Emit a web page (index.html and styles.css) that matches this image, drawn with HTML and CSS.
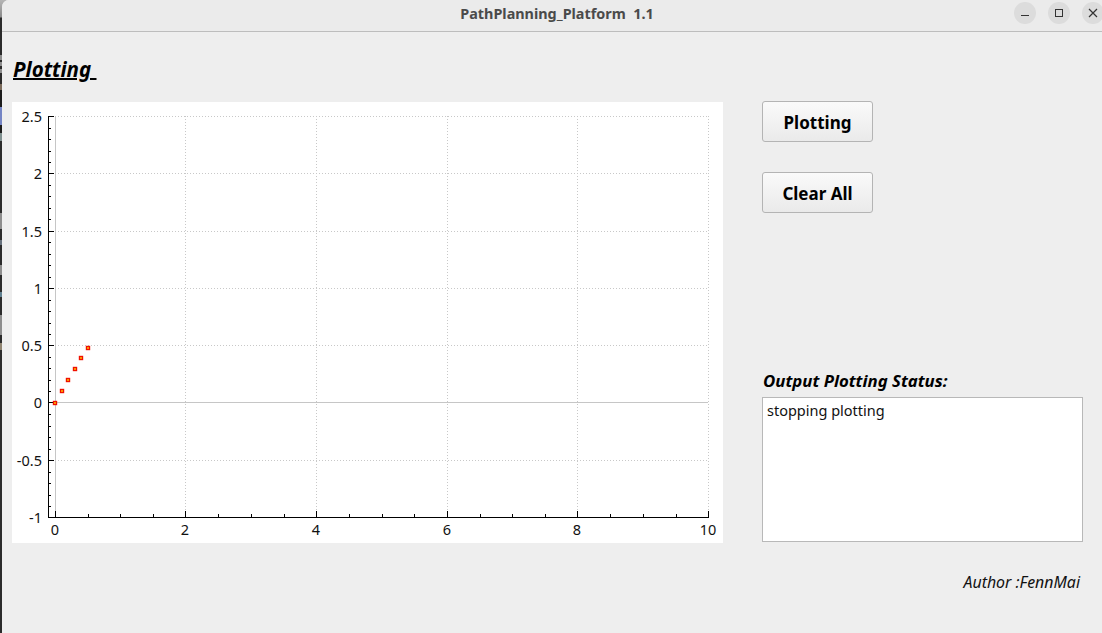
FILE: index.html
```html
<!DOCTYPE html>
<html lang="en">
<head>
<meta charset="utf-8">
<title>PathPlanning_Platform 1.1</title>
<link rel="stylesheet" href="styles.css">
</head>
<body class="desktop">
<div class="window">
  <header class="titlebar">
    <div class="title">PathPlanning_Platform&nbsp; 1.1</div>
    <div class="controls">
      <span class="ctl"><svg width="22" height="22" viewBox="0 0 22 22"><path d="M7 13.5h8" stroke="#333" stroke-width="1" fill="none"/></svg></span>
      <span class="ctl"><svg width="22" height="22" viewBox="0 0 22 22"><rect x="7.5" y="7.5" width="7" height="7" stroke="#333" fill="none"/></svg></span>
      <span class="ctl"><svg width="22" height="22" viewBox="0 0 22 22"><path d="M7 7l8 8M15 7l-8 8" stroke="#333" stroke-width="1.2" fill="none"/></svg></span>
    </div>
  </header>
  <main class="content">
    <section class="left">
      <h1 class="heading">Plotting&nbsp;</h1>
      <div class="plot">
        <svg class="chart" width="711" height="441" viewBox="0 0 711 441">
          <g class="grid">
            <path d="M43 14.5H696M43 71.5H696M43 129.5H696M43 186.5H696M43 243.5H696M43 358.5H696"/>
            <path d="M173.5 14V415M304.5 14V415M435.5 14V415M565.5 14V415M696.5 14V415"/>
          </g>
          <path class="zero" d="M43.5 14V415M43 300.5H696"/>
          <path class="axis" d="M36.5 14V415.5M36 415.5H697"/>
          <path class="axis" d="M36 14.5h6M36 71.5h6M36 129.5h6M36 186.5h6M36 243.5h6M36 300.5h6M36 358.5h6M36 415.5h6M43.5 415v-6M173.5 415v-6M304.5 415v-6M435.5 415v-6M565.5 415v-6M696.5 415v-6"/>
          <path class="axis" d="M36 26.5h3M36 37.5h3M36 49.5h3M36 60.5h3M36 83.5h3M36 94.5h3M36 106.5h3M36 117.5h3M36 140.5h3M36 152.5h3M36 163.5h3M36 175.5h3M36 198.5h3M36 209.5h3M36 221.5h3M36 232.5h3M36 255.5h3M36 266.5h3M36 278.5h3M36 289.5h3M36 312.5h3M36 324.5h3M36 335.5h3M36 347.5h3M36 370.5h3M36 381.5h3M36 393.5h3M36 404.5h3M76.5 415v-3M108.5 415v-3M141.5 415v-3M206.5 415v-3M239.5 415v-3M272.5 415v-3M337.5 415v-3M370.5 415v-3M402.5 415v-3M468.5 415v-3M500.5 415v-3M533.5 415v-3M598.5 415v-3M631.5 415v-3M664.5 415v-3"/>
          <g class="ylabels">
            <text x="30" y="20">2.5</text>
            <text x="30" y="77">2</text>
            <text x="30" y="135">1.5</text>
            <text x="30" y="192">1</text>
            <text x="30" y="249">0.5</text>
            <text x="30" y="306">0</text>
            <text x="30" y="364">-0.5</text>
            <text x="30" y="421">-1</text>
          </g>
          <g class="xlabels">
            <text x="43" y="433">0</text>
            <text x="173" y="433">2</text>
            <text x="304" y="433">4</text>
            <text x="435" y="433">6</text>
            <text x="565" y="433">8</text>
            <text x="696" y="433">10</text>
          </g>
          <g class="points">
            <rect x="41.5" y="299.5" width="3" height="3"/>
            <rect x="48.5" y="287.5" width="3" height="3"/>
            <rect x="54.5" y="276.5" width="3" height="3"/>
            <rect x="61.5" y="265.5" width="3" height="3"/>
            <rect x="67.5" y="254.5" width="3" height="3"/>
            <rect x="74.5" y="244.5" width="3" height="3"/>
          </g>
        </svg>
      </div>
    </section>
    <aside class="right">
      <button class="btn">Plotting</button>
      <button class="btn">Clear All</button>
      <div class="status">
        <div class="status-label">Output Plotting Status:</div>
        <div class="status-box">stopping plotting</div>
      </div>
      <div class="author">Author :FennMai</div>
    </aside>
  </main>
</div>
</body>
</html>
```
FILE: styles.css
```css
* { box-sizing: border-box; }
html, body { margin: 0; height: 100%; overflow: hidden; }
.desktop {
  background: linear-gradient(to bottom,
    #b5b5b5 0, #8a8a8a 17px, #2b2b2b 18px,
    #2b2b2b 55px, #8d8d8d 55px, #8d8d8d 60px, #2b2b2b 60px,
    #2b2b2b 62px, #8d8d8d 62px, #8d8d8d 66px, #2b2b2b 66px,
    #2b2b2b 69px, #8d8d8d 69px, #8d8d8d 73px, #2b2b2b 73px,
    #2b2b2b 84px, #7a6a5a 84px, #7a6a5a 90px, #1c1c1c 90px,
    #1c1c1c 107px, #7484c4 107px, #7484c4 125px, #1c1c1c 125px,
    #1c1c1c 133px, #7f8f8f 133px, #7f8f8f 141px, #2b2b2b 141px,
    #2b2b2b 213px, #8d8d8d 213px, #8d8d8d 229px, #2b2b2b 229px,
    #2b2b2b 240px, #66707c 240px, #66707c 245px, #2b2b2b 245px,
    #2b2b2b 265px, #8d8d8d 265px, #8d8d8d 275px, #2b2b2b 275px,
    #2b2b2b 292px, #5f7f8f 292px, #5f7f8f 297px, #2b2b2b 297px,
    #2b2b2b 315px, #8d8d8d 315px, #8d8d8d 335px, #2b2b2b 335px,
    #2b2b2b 343px, #8f8470 343px, #8f8470 350px, #2b2b2b 350px,
    #2b2b2b 100%);
  font-family: "Noto Sans", "Open Sans", sans-serif;
  color: #111;
}
.window {
  margin-left: 2px;
  width: 1100px;
  height: 633px;
  background: #eeeeee;
  border-top-left-radius: 7px;
  overflow: hidden;
  display: flex;
  flex-direction: column;
}
.titlebar {
  height: 32px;
  flex: none;
  background: #ebebeb;
  border-bottom: 1px solid #bdbdbd;
  display: flex;
  align-items: center;
  justify-content: center;
  padding-left: 10px;
  position: relative;
}
.title {
  font-size: 14.4px;
  font-weight: 700;
  color: #4a4a4a;
  margin-top: -4px;
}
.controls {
  position: absolute;
  right: -2px;
  top: 2px;
  display: flex;
  gap: 12px;
}
.ctl {
  width: 22px;
  height: 22px;
  border-radius: 50%;
  background: #dcdcdc;
  display: flex;
  align-items: center;
  justify-content: center;
}
.content {
  flex: 1;
  display: flex;
  padding-left: 10px;
}
.left { width: 711px; flex: none; }
.heading {
  margin: 25px 0 0 1px;
  font-size: 20.5px;
  line-height: 24px;
  height: 45px;
  font-weight: 700;
  font-style: italic;
  text-decoration: underline;
  text-decoration-thickness: 2px;
  color: #000;
}
.plot { width: 711px; height: 441px; background: #fff; }
.chart { display: block; }
.grid path { fill: none; stroke: #c8c8c8; stroke-width: 1; stroke-dasharray: 1 2; }
.zero { fill: none; stroke: #c6c6c6; stroke-width: 1; }
.axis { fill: none; stroke: #000; stroke-width: 1; }
.ylabels text, .xlabels text { font-size: 14.5px; fill: #111; font-family: "Noto Sans", sans-serif; }
.ylabels text { text-anchor: end; }
.xlabels text { text-anchor: middle; }
.points rect { fill: #ffe000; stroke: #f01000; stroke-width: 1.4; }
.right {
  margin-left: 39px;
  width: 321px;
  flex: none;
  display: flex;
  flex-direction: column;
  align-items: flex-start;
  padding-top: 69px;
}
.btn {
  width: 111px;
  height: 41px;
  margin-bottom: 30px;
  border: 1px solid #b4b4b4;
  border-radius: 3px;
  background: linear-gradient(#fafafa, #eaeaea);
  font: 700 17px "Noto Sans", sans-serif;
  color: #000;
  padding: 1px 0 0;
}
.status { margin-top: 128px; width: 321px; }
.status-label {
  font-size: 16.8px;
  line-height: 20px;
  height: 26px;
  font-weight: 700;
  font-style: italic;
  padding-left: 1px;
  color: #000;
}
.status-box {
  height: 145px;
  background: #fff;
  border: 1px solid #b8b8b8;
  padding: 3px 4px;
  font-size: 14.5px;
  line-height: 19px;
}
.author {
  width: 318px;
  text-align: right;
  margin-top: 30px;
  font-size: 15.9px;
  line-height: 20px;
  font-style: italic;
}
```
